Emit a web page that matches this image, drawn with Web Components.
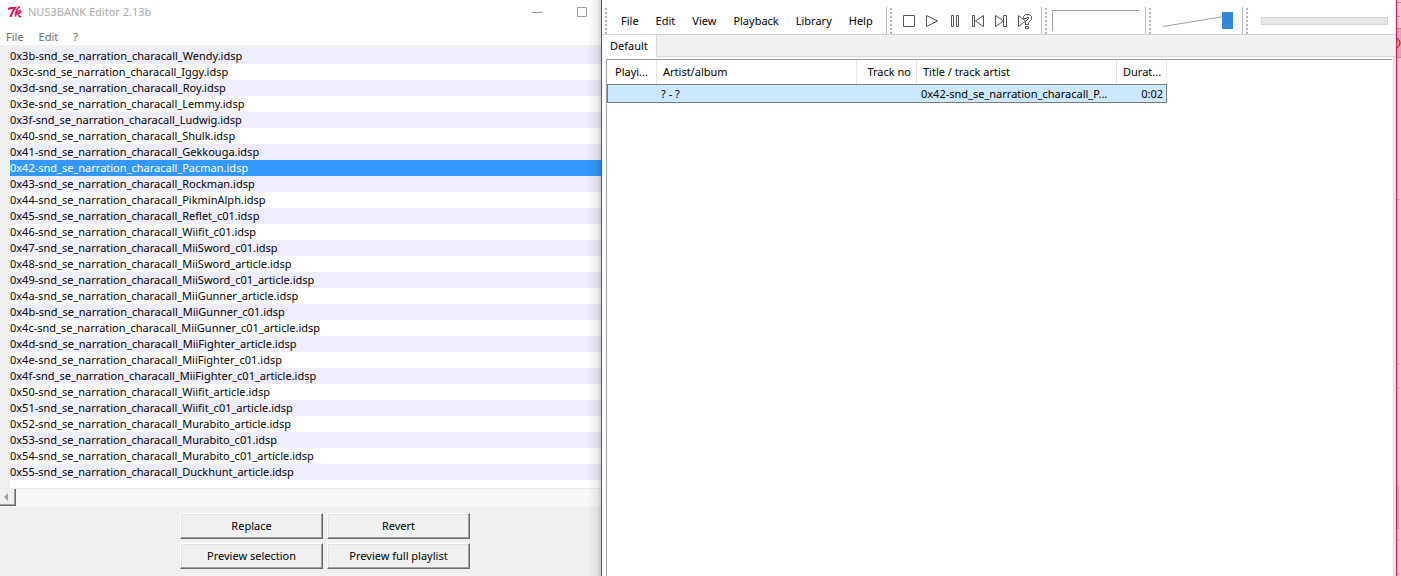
<!DOCTYPE html>
<html lang="en">
<head>
<meta charset="utf-8">
<title>NUS3BANK Editor</title>
<style>
body {
    margin: 0;
    font: 11px/16px "Noto Sans", "Open Sans", sans-serif;
    color: #000;
    background: #f0f0f0;
}
</style>
</head>
<body>
<desk-top>
    <bank-editor slot="left" name="NUS3BANK Editor 2.13b">
        <menu-strip slot="menu" class="dim" items="File,Edit,?"></menu-strip>
        <file-list slot="list" selected="0x42-snd_se_narration_characall_Pacman.idsp"></file-list>
        <tk-button>Replace</tk-button>
        <tk-button>Revert</tk-button>
        <tk-button>Preview selection</tk-button>
        <tk-button>Preview full playlist</tk-button>
    </bank-editor>
    <music-player slot="right">
        <tool-band slot="bands"><menu-strip items="File,Edit,View,Playback,Library,Help"></menu-strip></tool-band>
        <tool-band slot="bands"><transport-buttons></transport-buttons></tool-band>
        <tool-band slot="bands"><spectrum-box></spectrum-box></tool-band>
        <tool-band slot="bands"><volume-slider></volume-slider></tool-band>
        <tool-band slot="bands" class="grow"><seek-bar></seek-bar></tool-band>
        <track-table></track-table>
    </music-player>
</desk-top>

<script>
class BaseElement extends HTMLElement {
    constructor() {
        super();
        this.attachShadow({mode: 'open'});
    }

    connectedCallback() {
        this.shadowRoot.innerHTML = this.render();
    }
}

class DeskTop extends BaseElement {
    render() {
        return `
            <style>
            :host {
                display: grid;
                grid-template-columns: 601fr 796fr 4px;
                min-height: 100vh;
                overflow: hidden;
            }
            .behind {
                background: linear-gradient(#d6d6d6 28px, #b8b8b8 28px, #b8b8b8 58px, #d4d4d4 58px);
                overflow: hidden;
            }
            svg { display: block; }
            </style>
            <slot name="left"></slot>
            <slot name="right"></slot>
            <div class="behind">
                <svg width="4" height="576" viewBox="0 0 4 576">
                    <path d="M0 2.500h4M0 16.500h3M0 28.500h4M0 57.500h4" stroke="#999"/>
                    <path d="M0 199.500h3M0 363.500h3M0 387.500h3M0 528.500h3M0 539.500h3M0 573.500h3" stroke="#bbb"/>
                    <circle cx="-2" cy="43" r="5" fill="#f0a848" stroke="#333"/>
                    <rect y="485" width="2" height="43" fill="#b4b4b4"/>
                </svg>
            </div>
        `;
    }
}

class BankEditor extends BaseElement {
    render() {
        return `
            <style>
            :host {
                display: flex;
                flex-direction: column;
                position: relative;
                background: #f0f0f0;
                min-width: 0;
            }
            /* shadow cast by the window on the right */
            :host::after {
                content: "";
                position: absolute;
                inset: 0 0 0 auto;
                width: 14px;
                background: linear-gradient(90deg, rgba(0,0,0,0), rgba(0,0,0,.07) 70%, rgba(0,0,0,.16));
                pointer-events: none;
            }
            header {
                display: flex;
                align-items: center;
                height: 24px;
                padding: 0 14px 0 8px;
                background: #fff;
                color: #aaa;
            }
            header h1 {
                flex: 1;
                margin: 0 0 0 6px;
                font: inherit;
            }
            header svg { display: block; }
            .menu {
                display: block;
                box-sizing: border-box;
                height: 22px;
                padding: 4px 0 0 6px;
                background: #fff;
                border-bottom: 1px solid #f0f0f0;
            }
            .scroll {
                display: flex;
                height: 17px;
                border-top: 1px solid #eaeaea;
                background: repeating-conic-gradient(#fff 0 25%, #f0f0f0 0 50%) 0 0 / 2px 2px;
            }
            .scroll button {
                width: 16px;
                padding: 0;
                border: 0;
                border-right: 1px solid #696969;
                border-bottom: 1px solid #696969;
                background: #f0f0f0;
                box-shadow: inset -1px -1px #a0a0a0;
            }
            .scroll svg { display: block; margin: 0 auto 0 3px; }
            .actions {
                display: grid;
                grid-template-columns: 143px 143px;
                gap: 4px;
                justify-content: center;
                padding: 7px 0 7px 49px;
            }
            </style>
            <header>
                <svg width="14" height="12" viewBox="0 0 14 12" fill="none" stroke="#e0115f">
                    <path d="M0 3.500C2 1 4 2.500 7 2C5 5 3.500 7 2.500 11" stroke-width="2"/>
                    <path d="M12 0.500C9 2 7.500 6 7.500 10.500M8 8C10 4 14 4 12.500 6.500L9.500 8L11.500 10.500H13.500" stroke-width="1.500"/>
                </svg>
                <h1>${this.getAttribute('name')}</h1>
                <svg width="56" height="12" viewBox="0 0 56 12" fill="none" stroke="#999">
                    <path d="M1 6.500h10M46.500 1.500h9v9h-9z"/>
                </svg>
            </header>
            <div class="menu"><slot name="menu"></slot></div>
            <slot name="list"></slot>
            <div class="scroll">
                <button aria-label="Scroll left">
                    <svg width="8" height="10" viewBox="0 0 8 10"><path d="M1 5l4-4v8z" fill="#a0a0a0"/></svg>
                </button>
            </div>
            <div class="actions"><slot></slot></div>
        `;
    }
}

class MenuStrip extends BaseElement {
    render() {
        const items = this.getAttribute('items').split(',');
        return `
            <style>
            :host {
                display: flex;
                align-items: center;
                gap: 17px;
                height: 100%;
                padding: 0 13px 0 14px;
            }
            :host(.dim) { gap: 15px; padding: 0; color: #6d6d6d; }
            button {
                padding: 0;
                border: 0;
                background: none;
                font: inherit;
                color: inherit;
            }
            </style>
            ${items.map(item => `<button>${item}</button>`).join('')}
        `;
    }
}

class FileList extends BaseElement {
    get names() {
        return [
            '3b Wendy', '3c Iggy', '3d Roy', '3e Lemmy', '3f Ludwig', '40 Shulk', '41 Gekkouga',
            '42 Pacman', '43 Rockman', '44 PikminAlph', '45 Reflet_c01', '46 Wiifit_c01',
            '47 MiiSword_c01', '48 MiiSword_article', '49 MiiSword_c01_article',
            '4a MiiGunner_article', '4b MiiGunner_c01', '4c MiiGunner_c01_article',
            '4d MiiFighter_article', '4e MiiFighter_c01', '4f MiiFighter_c01_article',
            '50 Wiifit_article', '51 Wiifit_c01_article', '52 Murabito_article',
            '53 Murabito_c01', '54 Murabito_c01_article', '55 Duckhunt_article',
        ].map(entry => {
            const [id, name] = entry.split(' ');
            return `0x${id}-snd_se_narration_characall_${name}.idsp`;
        });
    }

    render() {
        const selected = this.getAttribute('selected');
        return `
            <style>
            :host { display: block; padding: 2px 0 0 10px; }
            ul {
                margin: 0;
                padding: 0 0 8px;
                list-style: none;
                background: #fff;
            }
            li {
                height: 16px;
                white-space: nowrap;
            }
            li:nth-child(odd) { background: #eeedfd; }
            li[aria-selected="true"] { background: #3399ff; color: #fff; }
            </style>
            <ul role="listbox" aria-label="Sounds">
                ${this.names.map(name => `<li role="option" aria-selected="${name === selected}">${name}</li>`).join('')}
            </ul>
        `;
    }
}

class TkButton extends BaseElement {
    render() {
        return `
            <style>
            :host { display: block; }
            button {
                display: block;
                width: 100%;
                height: 26px;
                padding: 0;
                border: 1px solid;
                border-color: #fff #696969 #696969 #fff;
                box-shadow: inset -1px -1px #a0a0a0, inset 1px 1px #e3e3e3;
                background: #f0f0f0;
                font: inherit;
                color: inherit;
            }
            </style>
            <button><slot></slot></button>
        `;
    }
}

class MusicPlayer extends BaseElement {
    render() {
        return `
            <style>
            :host {
                display: flex;
                flex-direction: column;
                min-width: 0;
                border: solid #e0115f;
                border-width: 0 1px;
                border-right-color: #ff0066;
                background: #f0f0f0;
            }
            .bar {
                display: flex;
                height: 34px;
                background: #fff;
                border-bottom: 1px solid #d4d4d4;
            }
            .tabs { display: flex; height: 22px; }
            .tabs button {
                padding: 0 8px;
                border: 0;
                border-right: 1px solid #d9d9d9;
                background: #fff;
                font: inherit;
            }
            .tabs span { flex: 1; border-bottom: 1px solid #d9d9d9; }
            .page {
                flex: 1;
                display: flex;
                margin-right: 2px;
                padding: 2px 1px 0 4px;
                background: #fff;
                border-right: 1px solid #d9d9d9;
            }
            </style>
            <div class="bar"><slot name="bands"></slot></div>
            <div class="tabs"><button>Default</button><span></span></div>
            <div class="page"><slot></slot></div>
        `;
    }
}

class ToolBand extends BaseElement {
    render() {
        return `
            <style>
            :host { display: flex; }
            :host(.grow) { flex: 1; }
            .grip {
                width: 2px;
                margin: 8px 0 0 3px;
                background: repeating-linear-gradient(#b4b4b4 0 2px, #fff 2px 4px);
            }
            .body { flex: 1; display: flex; align-items: center; padding-top: 7px; }
            .edge { width: 1px; margin-top: 7px; background: #b9b9b0; }
            :host(.grow) .edge { display: none; }
            </style>
            <div class="grip"></div>
            <div class="body"><slot></slot></div>
            <div class="edge"></div>
        `;
    }
}

class TransportButtons extends BaseElement {
    render() {
        const icons = {
            Stop: 'M2.500 2.500h11v11h-11z',
            Play: 'M2.500 2.500v11L13.500 8z',
            Pause: 'M4.500 2.500h2v11h-2zM9.500 2.500h2v11h-2z',
            Previous: 'M2.500 2.500h2v11h-2zM13.500 2.500v11L5.500 8z',
            Next: 'M2.500 2.500v11L10.500 8zM10.500 2.500h3v11h-3z',
            Random: 'M2.500 2.500v11L9.500 8zM7.500 3.500l2-2h4l2 2v3l-3 3v2h-3v-3l3-3v-1h-2v1h-3zM9.500 13.500h3v2h-3z',
        };
        return `
            <style>
            :host { display: flex; gap: 7px; padding: 0 9px; }
            button { padding: 0; border: 0; background: none; }
            svg { display: block; }
            </style>
            ${Object.entries(icons).map(([label, d]) => `
                <button aria-label="${label}">
                    <svg width="16" height="16" viewBox="0 0 16 16" fill="none" stroke="#555"><path d="${d}"/></svg>
                </button>`).join('')}
        `;
    }
}

class SpectrumBox extends BaseElement {
    render() {
        return `
            <style>
            :host { display: block; padding: 0 6px 0 5px; }
            div {
                width: 86px;
                height: 20px;
                border: solid #a0a0a0;
                border-width: 1px 0 0 1px;
            }
            </style>
            <div></div>
        `;
    }
}

class VolumeSlider extends BaseElement {
    render() {
        return `
            <style>
            :host { display: grid; padding: 0 9px 0 12px; }
            svg, input { grid-area: 1 / 1; }
            input {
                width: 70px;
                height: 18px;
                margin: 0;
                appearance: none;
                background: none;
            }
            input::-webkit-slider-thumb {
                appearance: none;
                width: 11px;
                height: 17px;
                background: #2f88da;
            }
            </style>
            <svg width="70" height="18" viewBox="0 0 70 18"><path d="M0 14.500L64 4" stroke="#a0a0a0" fill="none"/></svg>
            <input type="range" value="100" aria-label="Volume">
        `;
    }
}

class SeekBar extends BaseElement {
    render() {
        return `
            <style>
            :host { flex: 1; display: flex; padding: 0 8px 0 13px; }
            progress {
                flex: 1;
                min-width: 0;
                height: 8px;
                appearance: none;
                border: 1px solid #d6d6d6;
                box-sizing: border-box;
            }
            progress::-webkit-progress-bar { background: #e7e7ea; }
            </style>
            <progress value="0" max="100" aria-label="Position"></progress>
        `;
    }
}

class TrackTable extends BaseElement {
    render() {
        return `
            <style>
            :host {
                flex: 1;
                display: block;
                border: solid #a0a0a0;
                border-width: 1px 0 0 1px;
            }
            table {
                width: 560px;
                table-layout: fixed;
                border-collapse: separate;
                border-spacing: 0;
            }
            th, td {
                box-sizing: border-box;
                padding: 0;
                text-align: left;
                font-weight: normal;
                white-space: nowrap;
                overflow: hidden;
            }
            th {
                height: 24px;
                padding: 0 5px 0 6px;
                border-right: 1px solid #e5e5e5;
            }
            th:first-child { padding-left: 8px; }
            td {
                height: 19px;
                padding: 0 3px 0 4px;
                border: solid #7a7a7a;
                border-width: 1px 0;
                background: #cce8ff;
            }
            td:first-child { border-left-width: 1px; }
            td:last-child { border-right-width: 1px; }
            .num { text-align: right; }
            </style>
            <table>
                <colgroup>
                    <col style="width: 50px"><col style="width: 200px"><col style="width: 60px"><col style="width: 200px"><col style="width: 50px">
                </colgroup>
                <thead>
                    <tr><th>Playi...</th><th>Artist/album</th><th class="num">Track no</th><th>Title / track artist</th><th class="num">Durat...</th></tr>
                </thead>
                <tbody>
                    <tr><td></td><td>? - ?</td><td></td><td>0x42-snd_se_narration_characall_P...</td><td class="num">0:02</td></tr>
                </tbody>
            </table>
        `;
    }
}

customElements.define('desk-top', DeskTop);
customElements.define('bank-editor', BankEditor);
customElements.define('menu-strip', MenuStrip);
customElements.define('file-list', FileList);
customElements.define('tk-button', TkButton);
customElements.define('music-player', MusicPlayer);
customElements.define('tool-band', ToolBand);
customElements.define('transport-buttons', TransportButtons);
customElements.define('spectrum-box', SpectrumBox);
customElements.define('volume-slider', VolumeSlider);
customElements.define('seek-bar', SeekBar);
customElements.define('track-table', TrackTable);
</script>
</body>
</html>
